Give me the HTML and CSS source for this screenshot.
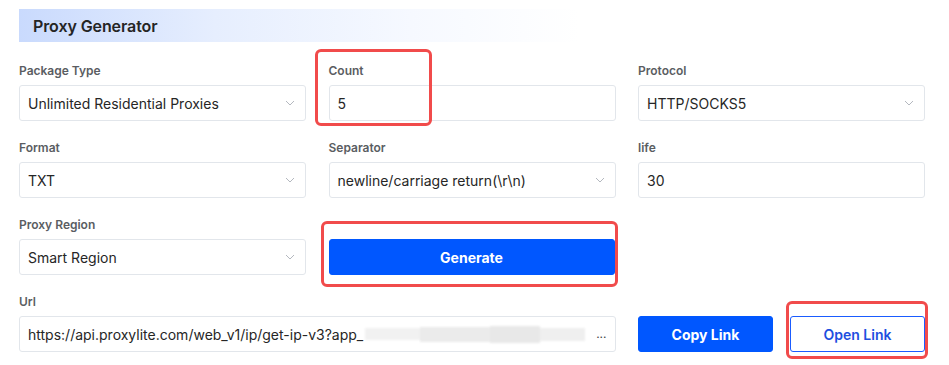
FILE: index.html
```html
<!DOCTYPE html>
<html lang="en">
<head>
<meta charset="utf-8">
<title>Proxy Generator</title>
<link rel="stylesheet" href="styles.css">
</head>
<body>
<div class="page">
  <div class="title-bar"><h1 class="title">Proxy Generator</h1></div>
  <div class="grid">
    <div class="field">
      <label class="label">Package Type</label>
      <div class="control select">
        <span class="value">Unlimited Residential Proxies</span>
        <svg class="chev" viewBox="0 0 10 6" width="10" height="6"><path d="M1 1l4 4 4-4" fill="none" stroke="#b4b8bf" stroke-width="1"/></svg>
      </div>
    </div>
    <div class="field">
      <label class="label">Count</label>
      <div class="control"><span class="value">5</span></div>
      <div class="mark mark-count"></div>
    </div>
    <div class="field">
      <label class="label">Protocol</label>
      <div class="control select">
        <span class="value">HTTP/SOCKS5</span>
        <svg class="chev" viewBox="0 0 10 6" width="10" height="6"><path d="M1 1l4 4 4-4" fill="none" stroke="#b4b8bf" stroke-width="1"/></svg>
      </div>
    </div>

    <div class="field">
      <label class="label">Format</label>
      <div class="control select">
        <span class="value">TXT</span>
        <svg class="chev" viewBox="0 0 10 6" width="10" height="6"><path d="M1 1l4 4 4-4" fill="none" stroke="#b4b8bf" stroke-width="1"/></svg>
      </div>
    </div>
    <div class="field">
      <label class="label">Separator</label>
      <div class="control select">
        <span class="value">newline/carriage return(\r\n)</span>
        <svg class="chev" viewBox="0 0 10 6" width="10" height="6"><path d="M1 1l4 4 4-4" fill="none" stroke="#b4b8bf" stroke-width="1"/></svg>
      </div>
    </div>
    <div class="field">
      <label class="label">life</label>
      <div class="control"><span class="value">30</span></div>
    </div>

    <div class="field">
      <label class="label">Proxy Region</label>
      <div class="control select">
        <span class="value">Smart Region</span>
        <svg class="chev" viewBox="0 0 10 6" width="10" height="6"><path d="M1 1l4 4 4-4" fill="none" stroke="#b4b8bf" stroke-width="1"/></svg>
      </div>
    </div>
    <div class="field field-btn">
      <button class="btn btn-primary btn-wide">Generate</button>
      <div class="mark mark-gen"></div>
    </div>
    <div class="field"></div>

    <div class="field span2">
      <label class="label">Url</label>
      <div class="control url">
        <span class="value">https://api.proxylite.com/web_v1/ip/get-ip-v3?app_</span>
        <span class="blur"><span class="b1"></span><span class="b2"></span><span class="b3"></span><span class="b4"></span></span>
        <span class="dots">...</span>
      </div>
    </div>
    <div class="field field-btn">
      <div class="btn-row">
        <button class="btn btn-primary">Copy Link</button>
        <span class="open-wrap">
          <button class="btn btn-outline">Open Link</button>
          <span class="mark mark-open"></span>
        </span>
      </div>
    </div>
  </div>
</div>
</body>
</html>
```

FILE: styles.css
```css
* { box-sizing: border-box; }
html, body { margin: 0; padding: 0; background: #fff; }
body {
  font-family: Inter, "Noto Sans", "Liberation Sans", sans-serif;
  color: #222;
}
.page {
  padding: 9px 24px 12px 19px;
  width: 949px;
  min-height: 365px;
}
.title-bar {
  width: 560px;
  height: 33px;
  background: linear-gradient(90deg, #c9dafd 0%, #e6eefe 35%, #f6f9ff 70%, #ffffff 100%);
  display: flex;
  align-items: center;
  padding-left: 14px;
}
.title {
  margin: 0;
  font-size: 16px;
  font-weight: 600;
  color: #252525;
  letter-spacing: -0.1px;
}
.grid {
  margin-top: 20px;
  display: grid;
  grid-template-columns: 287px 287px 287px;
  column-gap: 22.5px;
  row-gap: 18px;
}
.field {
  position: relative;
  display: flex;
  flex-direction: column;
}
.span2 { grid-column: span 2; }
.field-btn { justify-content: flex-end; }
.label {
  font-size: 12px;
  font-weight: 600;
  color: #5a5d62;
  line-height: 18px;
  margin-bottom: 5px;
}
.control {
  height: 36px;
  border: 1px solid #e2e6eb;
  border-radius: 3px;
  display: flex;
  align-items: center;
  padding: 0 8px;
  font-size: 14px;
  color: #262626;
  background: #fff;
}
.select { justify-content: space-between; padding-right: 10px; }
.value { white-space: nowrap; }
.chev { flex: none; }
.url { position: relative; overflow: hidden; }
.blur {
  display: flex;
  align-items: center;
  height: 20px;
  margin-left: 2px;
  flex: 1;
  filter: blur(1.2px);
}
.blur span { display: block; height: 14px; background: #ececec; }
.blur .b1 { width: 55px; background: #f1f1f1; height: 12px; }
.blur .b2 { width: 70px; background: #ebebeb; height: 15px; }
.blur .b3 { width: 50px; background: #e8e8e8; height: 17px; }
.blur .b4 { width: 45px; background: #efefef; height: 13px; }
.dots { font-size: 12px; color: #444; margin-left: 2px; margin-top: -2px; }
.btn {
  font-family: inherit;
  height: 36px;
  border-radius: 3px;
  font-size: 14px;
  font-weight: 700;
  cursor: pointer;
}
.btn-primary {
  background: #0057ff;
  border: 1px solid #0057ff;
  color: #fff;
}
.btn-wide { width: 286px; }
.btn-row {
  display: flex;
  gap: 17px;
}
.btn-row .btn { width: 135px; }
.open-wrap { position: relative; display: block; }
.btn-outline {
  display: block;
  background: #fff;
  border: 1px solid #1a5cff;
  color: #1d4fe0;
  font-weight: 600;
}
.mark {
  position: absolute;
  border: 3px solid #f14b4b;
  border-radius: 6px;
  pointer-events: none;
}
.mark-count { left: -14px; top: -13px; width: 117px; height: 77px; }
.mark-gen { left: -8px; bottom: -12px; width: 297px; height: 66px; }
.mark-open { left: -4px; top: -15px; right: -3px; bottom: -7px; }
```
